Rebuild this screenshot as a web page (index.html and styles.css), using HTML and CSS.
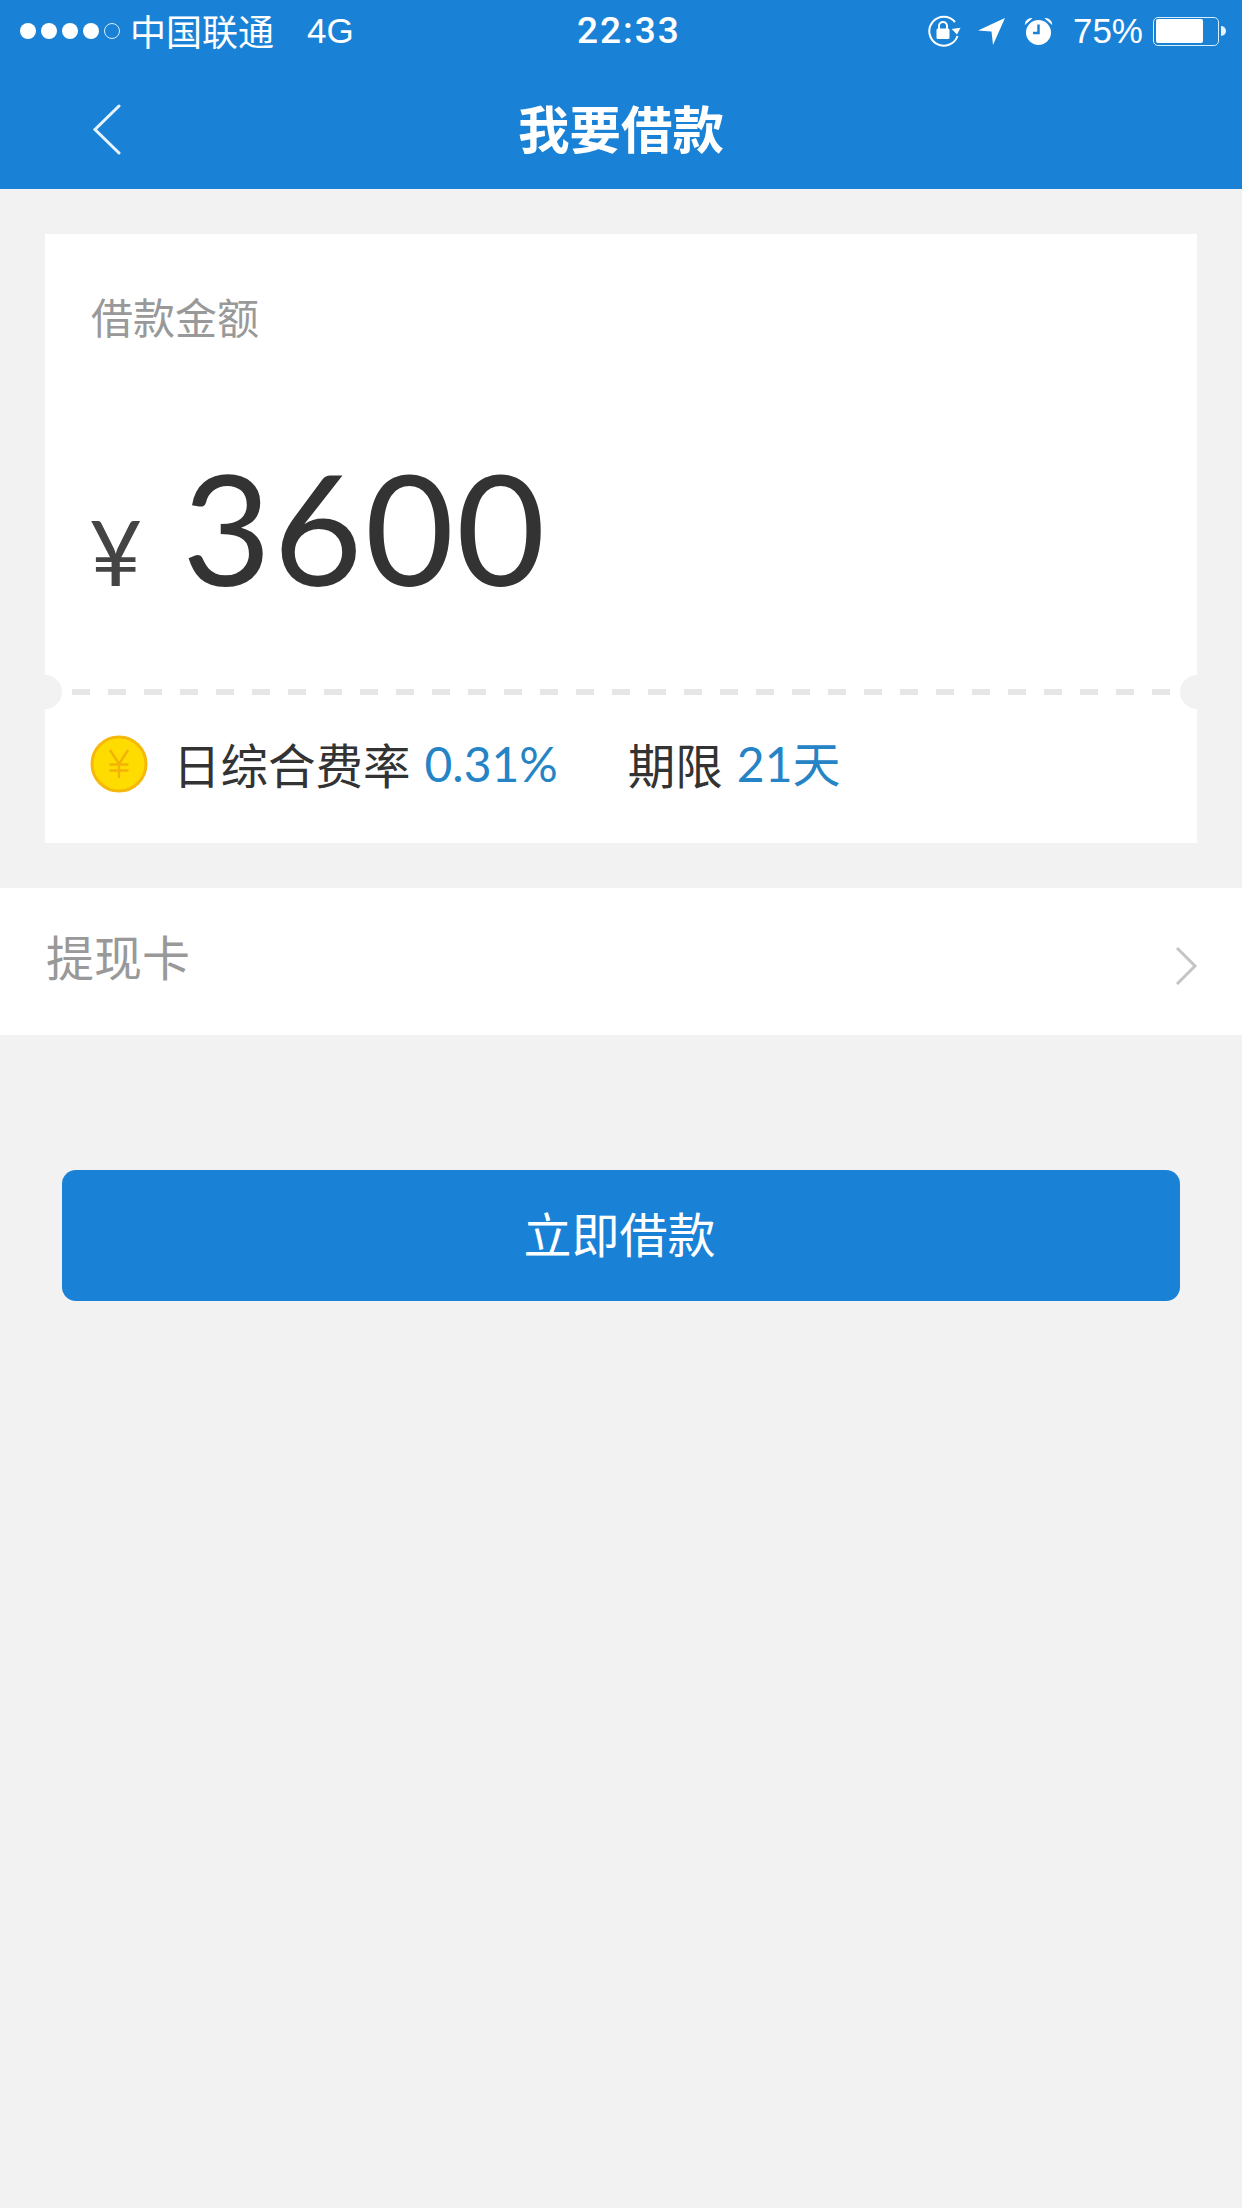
FILE: index.html
```html
<!DOCTYPE html>
<html lang="zh-CN">
<head>
<meta charset="utf-8">
<title>我要借款</title>
<link rel="stylesheet" href="styles.css">
</head>
<body>
<div class="page">
  <header class="header">
    <div class="status">
      <div class="status-left">
        <div class="dots"><i class="dot"></i><i class="dot"></i><i class="dot"></i><i class="dot"></i><i class="dot off"></i></div>
        <span class="carrier">中国联通</span>
        <span class="net">4G</span>
      </div>
      <div class="time">22:33</div>
      <div class="status-right">
        <svg class="ic-lock" width="36" height="32" viewBox="0 0 36 32">
          <path d="M31.500 21A14.500 14.500 0 1 1 29 7" fill="none" stroke="#fff" stroke-width="2"/>
          <path d="M26 13.500h9l-4.500 6z" fill="#fff" transform="rotate(-8 30 16)"/>
          <rect x="10.500" y="13.500" width="13" height="10.500" rx="1.500" fill="#fff"/>
          <path d="M13 14v-3a4 4 0 0 1 8 0v3" fill="none" stroke="#fff" stroke-width="2"/>
        </svg>
        <svg class="ic-loc" width="27" height="27" viewBox="0 0 27 27"><path d="M27 0L0 12.500l13.500 1L15 27z" fill="#fff"/></svg>
        <svg class="ic-alarm" width="29" height="28" viewBox="0 0 29 28">
          <circle cx="14.500" cy="15.500" r="12.500" fill="#fff"/>
          <path d="M.8 8A6.500 6.500 0 0 1 8.500 1.200zM28.200 8A6.500 6.500 0 0 0 20.500 1.200z" fill="#fff"/>
          <path d="M14.500 7.500v8.500H9" fill="none" stroke="#1a82d6" stroke-width="2.500"/>
        </svg>
        <span class="pct">75%</span>
        <div class="battery"><div class="battery-fill"></div></div>
        <div class="battery-nub"></div>
      </div>
    </div>
    <div class="nav">
      <svg class="back" width="29" height="51" viewBox="0 0 29 51"><path d="M27 2L3 25.500 27 49" fill="none" stroke="#e8f3fb" stroke-width="3" stroke-linecap="round"/></svg>
      <h1 class="title">我要借款</h1>
    </div>
  </header>

  <section class="card">
    <div class="card-top">
      <div class="label">借款金额</div>
      <div class="amount"><span class="yen">¥</span><span class="value">3600</span></div>
    </div>
    <div class="divider"><i class="notch notch-l"></i><i class="notch notch-r"></i></div>
    <div class="card-bottom">
      <svg class="coin" width="58" height="58" viewBox="0 0 58 58">
        <circle cx="29" cy="29" r="27" fill="#ffdc00" stroke="#f6b80a" stroke-width="3"/>
        <path d="M20 15l9 14 9-14M29 29v14M19.500 29.500h19M19.500 35.500h19" fill="none" stroke="#f2b305" stroke-width="2.500"/>
      </svg>
      <span class="term">日综合费率</span>
      <span class="val rate">0.31%</span>
      <span class="term term-gap">期限</span>
      <span class="val days">21天</span>
    </div>
  </section>

  <section class="row">
    <span class="row-label">提现卡</span>
    <svg class="chev" width="24" height="40" viewBox="0 0 24 40"><path d="M3 2l18 18L3 38" fill="none" stroke="#c4c4c4" stroke-width="3"/></svg>
  </section>

  <div class="action"><button class="btn"><span class="btn-text">立即借款</span></button></div>
</div>
</body>
</html>
```
FILE: styles.css
```css
* { box-sizing: border-box; }
html, body { margin: 0; padding: 0; }
body {
  background: #f2f2f2;
  font-family: "Noto Sans CJK SC", "Noto Sans", sans-serif;
}
.page {
  width: 1242px;
  height: 2208px;
  display: flex;
  flex-direction: column;
  overflow: hidden;
}
.header {
  height: 189px;
  background: #1a82d6;
  color: #fff;
}
.status {
  height: 62px;
  display: flex;
  align-items: center;
  justify-content: space-between;
  padding: 0 16px 0 20px;
  position: relative;
}
.status-left { display: flex; align-items: center; }
.dots { display: flex; gap: 5px; margin-right: 10px; }
.dot { width: 16px; height: 16px; border-radius: 50%; background: #fff; }
.dot.off { background: transparent; border: 1.500px solid #d8ecfa; }
.carrier { font-size: 36px; font-weight: 400; line-height: 62px; margin-top: -3px; }
.net {
  font-family: "Liberation Sans", sans-serif;
  font-size: 35px;
  margin-left: 33px;
}
.time {
  font-family: Roboto, sans-serif;
  font-size: 37px;
  font-weight: 500;
  letter-spacing: 2px;
  position: absolute;
  left: 577px;
  top: 9px;
}
.status-right { display: flex; align-items: center; }
.ic-lock { margin-right: 16px; }
.ic-loc { margin-right: 19px; }
.ic-alarm { margin-right: 20px; }
.pct {
  font-family: "Liberation Sans", sans-serif;
  font-size: 35px;
  margin-right: 10px;
}
.battery {
  width: 66px;
  height: 29px;
  border: 1.500px solid #d8ecfa;
  border-radius: 5px;
  padding: 1.500px;
}
.battery-fill { width: 47px; height: 100%; background: #fff; border-radius: 2px; }
.battery-nub {
  width: 5px;
  height: 10px;
  margin-left: 2px;
  background: #e8f3fb;
  border-radius: 0 5px 5px 0;
}
.nav {
  height: 127px;
  display: flex;
  align-items: center;
  justify-content: center;
  position: relative;
}
.back { position: absolute; left: 92px; top: 42px; }
.title { margin: 0 0 -3px; font-size: 51.500px; font-weight: 700; line-height: 1; }

.card {
  margin: 45px 45px 0;
  background: #fff;
}
.card-top { height: 455px; padding: 0 44px; }
.label {
  padding-top: 58px;
  padding-left: 2px;
  font-size: 42px;
  line-height: 48px;
  color: #999;
  font-weight: 400;
}
.amount {
  display: flex;
  align-items: baseline;
  margin-top: 101px;
  font-family: Lato, sans-serif;
  font-weight: 400;
  color: #333;
  line-height: 172px;
}
.yen { font-size: 92px; width: 93px; color: #444; }
.value { font-size: 154px; letter-spacing: 2px; }
.divider {
  height: 6px;
  margin: 0 17px;
  background: repeating-linear-gradient(90deg, #e6e6e6 0 18px, transparent 18px 36px) 10px 0 no-repeat;
  background-size: 1098px 6px;
  position: relative;
}
.notch {
  position: absolute;
  top: -14px;
  width: 34px;
  height: 34px;
  border-radius: 50%;
  background: #f2f2f2;
}
.notch-l { left: -34px; }
.notch-r { right: -34px; }
.card-bottom {
  height: 148px;
  padding: 0 0 10px 45px;
  display: flex;
  align-items: center;
  font-size: 47.500px;
  color: #333;
}
.coin { margin-right: 25px; flex: none; }
.term { font-weight: 400; line-height: 1; }
.val { color: #2584c6; font-size: 48px; font-weight: 400; line-height: 1; font-family: Lato, "Noto Sans CJK SC", sans-serif; }
.rate { margin-left: 14px; }
.term-gap { margin-left: 70px; }
.days { margin-left: 14px; }

.row {
  margin-top: 45px;
  height: 147px;
  background: #fff;
  display: flex;
  align-items: center;
  justify-content: space-between;
  padding: 0 44px 0 46px;
}
.row-label {
  font-size: 48px;
  line-height: 1;
  color: #999;
  font-weight: 400;
  margin-top: -14px;
}
.chev { margin-top: 8px; }
.action { padding: 135px 62px 0; }
.btn {
  display: block;
  width: 100%;
  height: 131px;
  border: 0;
  border-radius: 14px;
  background: #1a82d6;
  color: #fff;
  font-family: inherit;
  font-size: 48px;
  font-weight: 400;
  padding: 0 3px 7px 0;
}
.btn-text { line-height: 1; }
```
